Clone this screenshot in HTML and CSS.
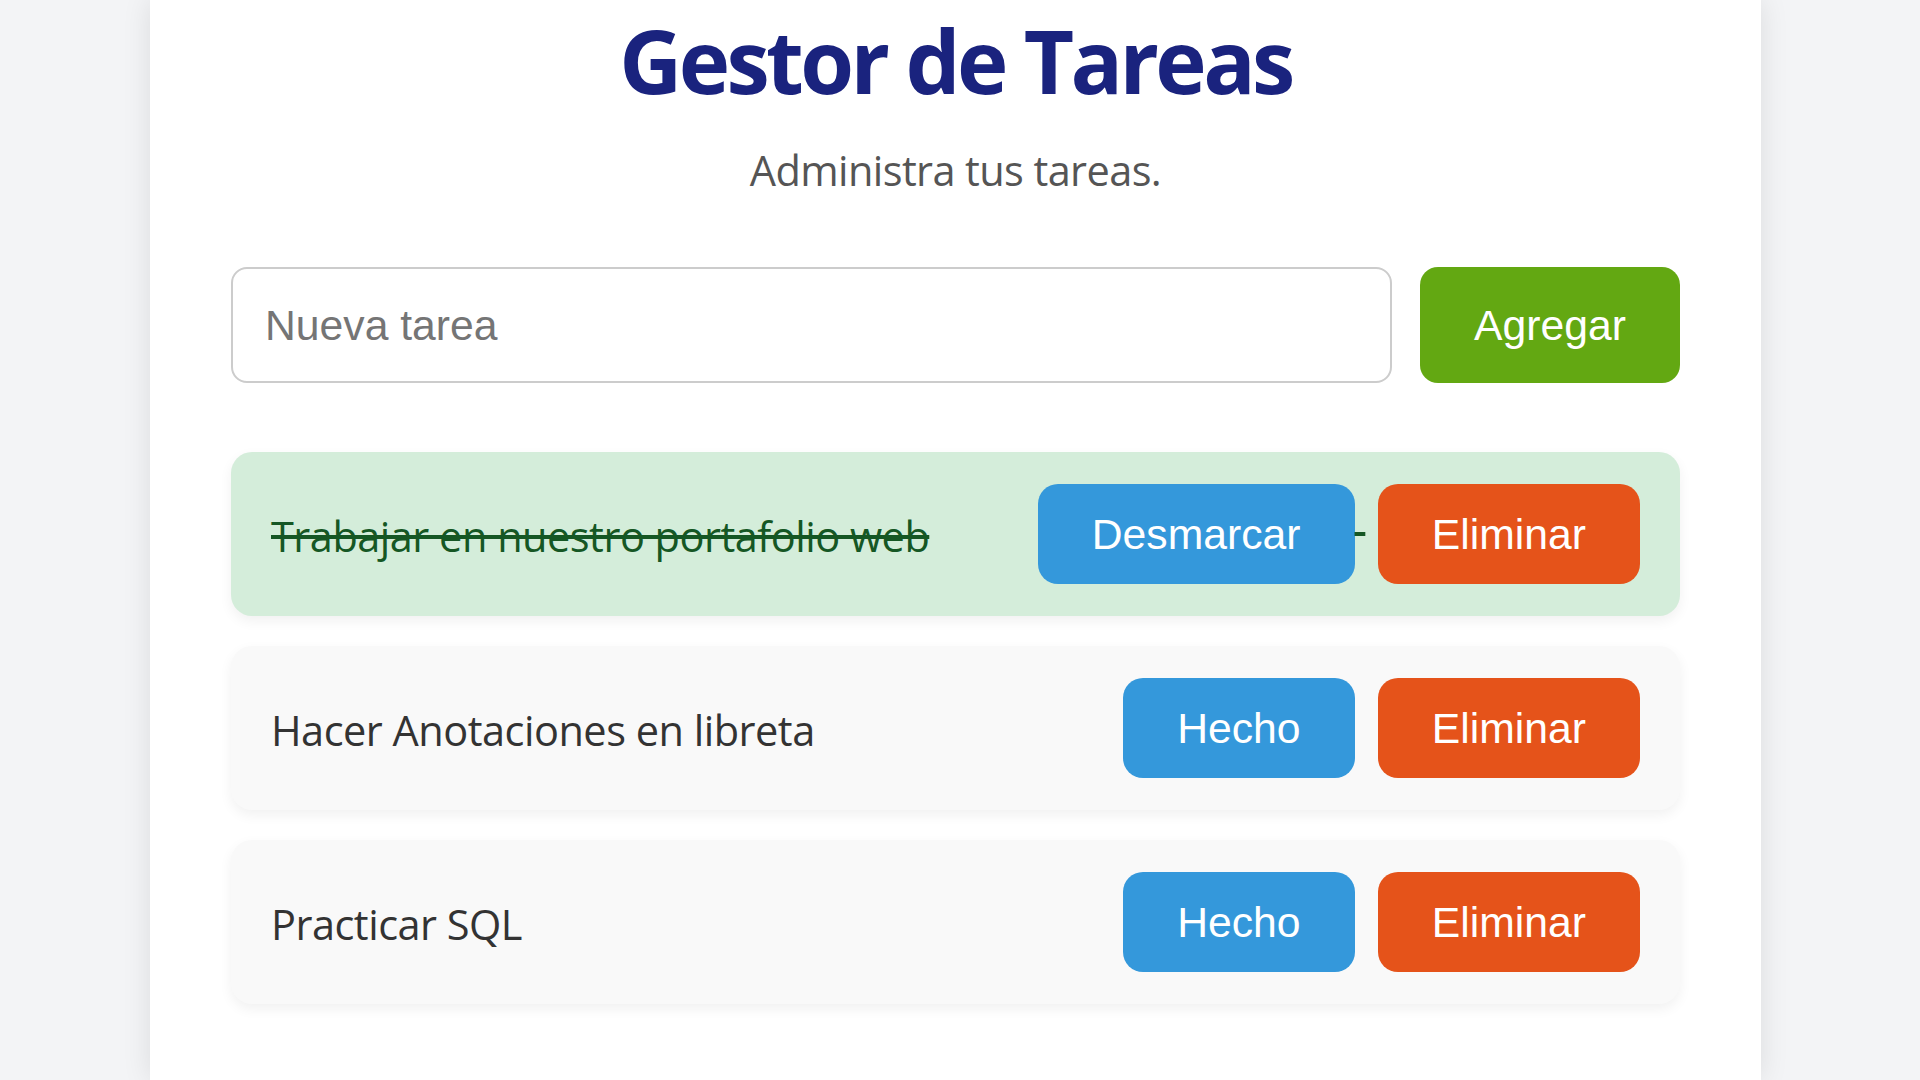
FILE: index.html
```html
<!DOCTYPE html>
<html lang="es">
<head>
<meta charset="utf-8">
<title>Gestor de Tareas</title>
<link rel="stylesheet" href="styles.css">
</head>
<body>
<main class="card">
  <h1 class="title">Gestor de Tareas</h1>
  <p class="subtitle">Administra tus tareas.</p>
  <form class="add-row" onsubmit="return false;">
    <input class="task-input" type="text" placeholder="Nueva tarea">
    <button class="btn btn-add" type="submit">Agregar</button>
  </form>
  <ul class="task-list">
    <li class="task completed">
      <span class="task-text">Trabajar en nuestro portafolio web</span>
      <div class="actions">
        <button class="btn btn-toggle">Desmarcar</button>
        <button class="btn btn-delete">Eliminar</button>
      </div>
    </li>
    <li class="task">
      <span class="task-text">Hacer Anotaciones en libreta</span>
      <div class="actions">
        <button class="btn btn-toggle">Hecho</button>
        <button class="btn btn-delete">Eliminar</button>
      </div>
    </li>
    <li class="task">
      <span class="task-text">Practicar SQL</span>
      <div class="actions">
        <button class="btn btn-toggle">Hecho</button>
        <button class="btn btn-delete">Eliminar</button>
      </div>
    </li>
  </ul>
</main>
</body>
</html>
```

FILE: styles.css
```css
html, body {
  margin: 0;
  padding: 0;
}

body {
  background: #f3f4f6;
  font-family: "Open Sans", "Noto Sans", sans-serif;
  min-height: 1080px;
}

.card {
  box-sizing: border-box;
  width: 1611px;
  margin-left: 150px;
  min-height: 1080px;
  background: #ffffff;
  padding: 8px 81px 60px;
  box-shadow: 0 0 27px rgba(0, 0, 0, 0.1);
}

.title {
  margin: 0;
  font-size: 87px;
  line-height: 1.2;
  font-weight: 700;
  letter-spacing: -3.6px;
  color: #1a237e;
  text-align: center;
}

.subtitle {
  margin: 34px 0 0;
  font-size: 41.5px;
  line-height: 1.2;
  letter-spacing: -0.6px;
  color: #555555;
  text-align: center;
}

.add-row {
  display: flex;
  gap: 28px;
  margin: 71px 0 0;
  height: 116px;
}

.task-input {
  flex: 1;
  box-sizing: border-box;
  height: 116px;
  margin: 0;
  padding: 0 32px;
  border: 2.5px solid #cccccc;
  border-radius: 16px;
  font-family: "Liberation Sans", Arial, sans-serif;
  font-size: 42.7px;
  color: #333333;
  background: #ffffff;
  outline: none;
}

.task-input::placeholder {
  color: #757575;
}

.btn {
  font-family: "Liberation Sans", Arial, sans-serif;
  font-size: 42.7px;
  line-height: normal;
  color: #ffffff;
  border: none;
  cursor: pointer;
  padding: 25.5px 54px;
  border-radius: 20px;
  margin: 0;
}

.btn-add {
  background: #63a812;
  width: 260px;
  padding: 0;
  border-radius: 18px;
}

.task-list {
  list-style: none;
  margin: 69px 0 0;
  padding: 0;
  display: flex;
  flex-direction: column;
  gap: 30px;
}

.task {
  box-sizing: border-box;
  height: 164px;
  display: flex;
  align-items: center;
  justify-content: space-between;
  padding: 0 40px;
  background: #f9f9f9;
  border-radius: 21px;
  box-shadow: 0 5px 13px rgba(0, 0, 0, 0.06);
  font-size: 41.5px;
  color: #333333;
}

.task-text {
  padding-top: 4px;
  letter-spacing: -0.5px;
}

.task.completed {
  background: #d4edda;
  color: #155724;
  text-decoration: line-through;
}

.actions {
  white-space: nowrap;
}

.actions .btn + .btn {
  margin-left: 12.5px;
}

.btn-toggle {
  background: #3498db;
}

.btn-delete {
  background: #e5531a;
}
```
